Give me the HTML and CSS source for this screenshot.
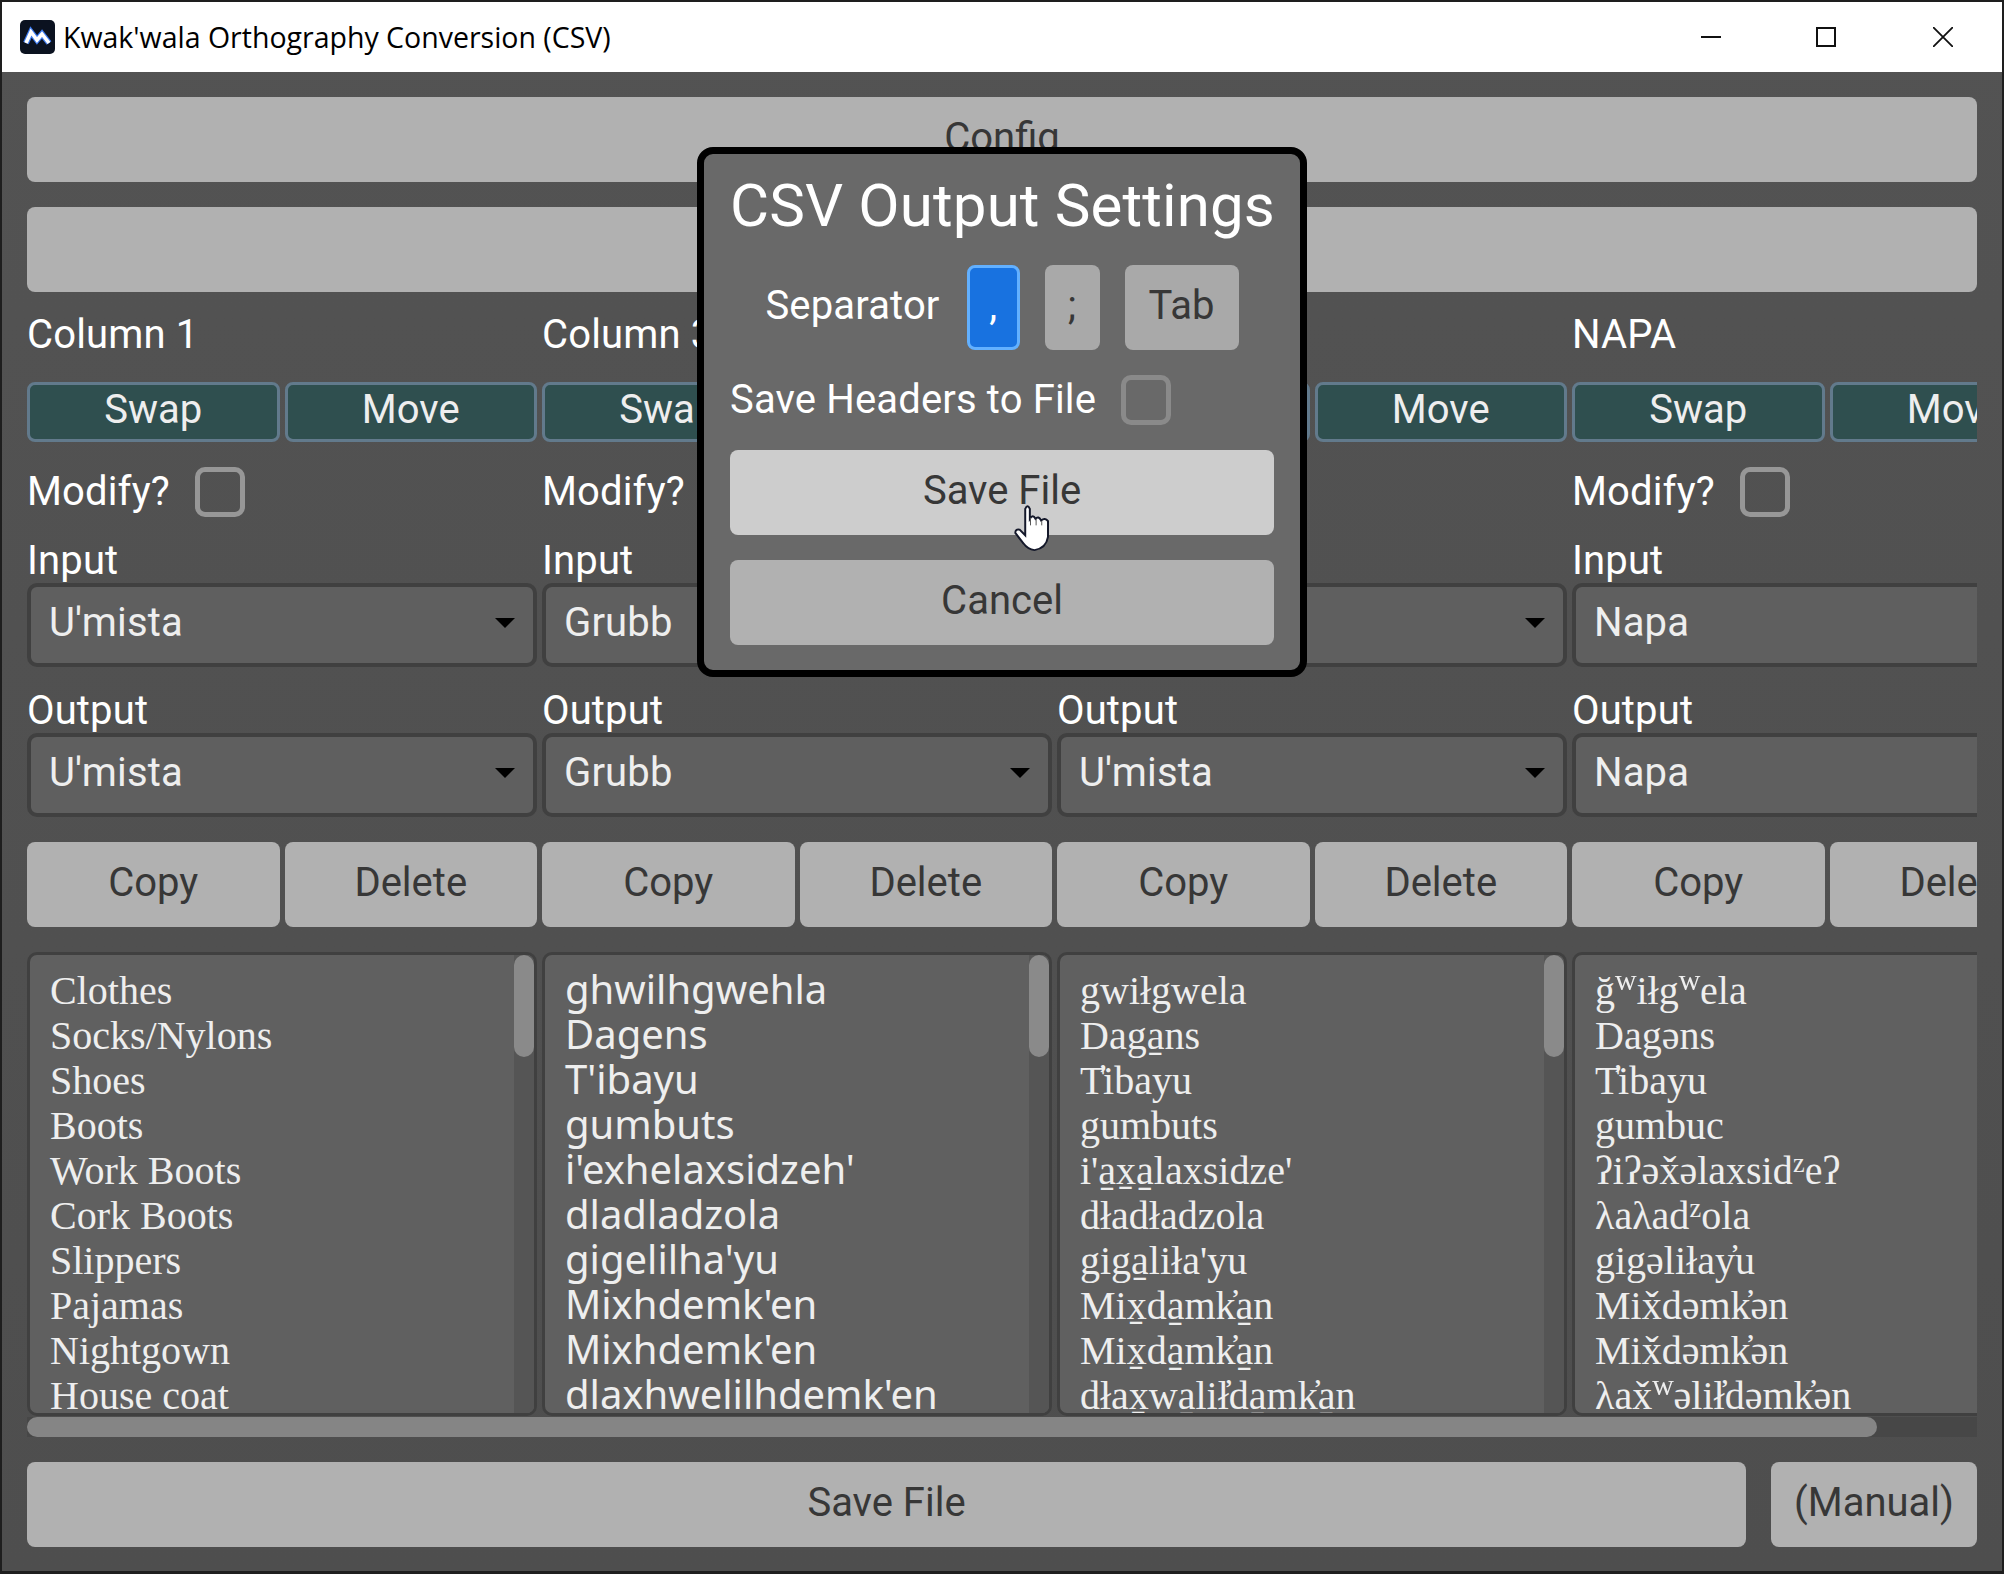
FILE: index.html
```html
<!DOCTYPE html>
<html lang="en">
<head>
    <meta charset="UTF-8">
    <title>Kwak'wala Orthography Conversion (CSV)</title>
    <link rel="stylesheet" href="styles.css">
</head>
<body>
<div class="window">
    <header class="titlebar">
        <svg class="app-icon" viewBox="0 0 35 34" width="35" height="34">
            <rect width="35" height="34" rx="5" fill="#0b1220"/>
            <path d="M6 23 L11 12 L17 20 L22 14 L29 23" fill="none" stroke="#3d7bf0" stroke-width="6"/>
            <path d="M6 23 L11 12 L17 20 L22 14 L29 23" fill="none" stroke="#fff" stroke-width="3.6"/>
        </svg>
        <span class="app-title">Kwak'wala Orthography Conversion (CSV)</span>
        <div class="win-controls">
            <svg viewBox="0 0 20 20" width="20" height="20"><path d="M0 10H20" stroke="#111" stroke-width="2"/></svg>
            <svg viewBox="0 0 20 20" width="20" height="20"><rect x="1" y="1" width="18" height="18" fill="none" stroke="#111" stroke-width="2"/></svg>
            <svg class="win-close" viewBox="0 0 20 20" width="20" height="20"><path d="M0 0L20 20M20 0L0 20" stroke="#111" stroke-width="1.8"/></svg>
        </div>
    </header>

    <main class="content">
        <button class="btn btn-wide">Config</button>
        <button class="btn btn-wide">Open File</button>

        <div class="scroll-area">
            <div class="columns">
                <section class="column">
                    <div class="label">Column 1</div>
                    <div class="btn-row">
                        <button class="btn-teal">Swap</button>
                        <button class="btn-teal">Move</button>
                    </div>
                    <div class="modify"><span>Modify?</span><span class="checkbox"></span></div>
                    <div class="field">
                        <div class="label">Input</div>
                        <div class="pick"><span>U'mista</span><i class="arrow"></i></div>
                    </div>
                    <div class="field">
                        <div class="label">Output</div>
                        <div class="pick"><span>U'mista</span><i class="arrow"></i></div>
                    </div>
                    <div class="btn-row">
                        <button class="btn">Copy</button>
                        <button class="btn">Delete</button>
                    </div>
                    <div class="list serif">
                        <div class="rows">
                            <div>Clothes</div>
                            <div>Socks/Nylons</div>
                            <div>Shoes</div>
                            <div>Boots</div>
                            <div>Work Boots</div>
                            <div>Cork Boots</div>
                            <div>Slippers</div>
                            <div>Pajamas</div>
                            <div>Nightgown</div>
                            <div>House coat</div>
                        </div>
                        <div class="vscroll"><div class="vthumb"></div></div>
                    </div>
                </section>

                <section class="column">
                    <div class="label">Column 3</div>
                    <div class="btn-row">
                        <button class="btn-teal">Swap</button>
                        <button class="btn-teal">Move</button>
                    </div>
                    <div class="modify"><span>Modify?</span><span class="checkbox"></span></div>
                    <div class="field">
                        <div class="label">Input</div>
                        <div class="pick"><span>Grubb</span><i class="arrow"></i></div>
                    </div>
                    <div class="field">
                        <div class="label">Output</div>
                        <div class="pick"><span>Grubb</span><i class="arrow"></i></div>
                    </div>
                    <div class="btn-row">
                        <button class="btn">Copy</button>
                        <button class="btn">Delete</button>
                    </div>
                    <div class="list noto">
                        <div class="rows">
                            <div>ghwilhgwehla</div>
                            <div>Dagens</div>
                            <div>T'ibayu</div>
                            <div>gumbuts</div>
                            <div>i'exhelaxsidzeh'</div>
                            <div>dladladzola</div>
                            <div>gigelilha'yu</div>
                            <div>Mixhdemk'en</div>
                            <div>Mixhdemk'en</div>
                            <div>dlaxhwelilhdemk'en</div>
                        </div>
                        <div class="vscroll"><div class="vthumb"></div></div>
                    </div>
                </section>

                <section class="column">
                    <div class="label">Column 4</div>
                    <div class="btn-row">
                        <button class="btn-teal">Swap</button>
                        <button class="btn-teal">Move</button>
                    </div>
                    <div class="modify"><span>Modify?</span><span class="checkbox"></span></div>
                    <div class="field">
                        <div class="label">Input</div>
                        <div class="pick"><span>U'mista</span><i class="arrow"></i></div>
                    </div>
                    <div class="field">
                        <div class="label">Output</div>
                        <div class="pick"><span>U'mista</span><i class="arrow"></i></div>
                    </div>
                    <div class="btn-row">
                        <button class="btn">Copy</button>
                        <button class="btn">Delete</button>
                    </div>
                    <div class="list serif">
                        <div class="rows">
                            <div>gwiłgwela</div>
                            <div>Daga̱ns</div>
                            <div>T̓ibayu</div>
                            <div>gumbuts</div>
                            <div>i'a̱x̱a̱laxsidze'</div>
                            <div>dładładzola</div>
                            <div>giga̱liła'yu</div>
                            <div>Mix̱da̱mk̓a̱n</div>
                            <div>Mix̱da̱mk̓a̱n</div>
                            <div>dłax̱wa̱lił̓da̱mk̓a̱n</div>
                        </div>
                        <div class="vscroll"><div class="vthumb"></div></div>
                    </div>
                </section>

                <section class="column">
                    <div class="label">NAPA</div>
                    <div class="btn-row">
                        <button class="btn-teal">Swap</button>
                        <button class="btn-teal">Move</button>
                    </div>
                    <div class="modify"><span>Modify?</span><span class="checkbox"></span></div>
                    <div class="field">
                        <div class="label">Input</div>
                        <div class="pick"><span>Napa</span><i class="arrow"></i></div>
                    </div>
                    <div class="field">
                        <div class="label">Output</div>
                        <div class="pick"><span>Napa</span><i class="arrow"></i></div>
                    </div>
                    <div class="btn-row">
                        <button class="btn">Copy</button>
                        <button class="btn">Delete</button>
                    </div>
                    <div class="list serif">
                        <div class="rows">
                            <div>ğ<span class="mod">ʷ</span>iłg<span class="mod">ʷ</span>ela</div>
                            <div>Dagəns</div>
                            <div>T̓ibayu</div>
                            <div>gumbuc</div>
                            <div>ʔiʔəx̌əlaxsid<span class="mod-z">ᶻ</span>eʔ</div>
                            <div>λaλad<span class="mod-z">ᶻ</span>ola</div>
                            <div>gigəliłay̓u</div>
                            <div>Mix̌dəmk̓ən</div>
                            <div>Mix̌dəmk̓ən</div>
                            <div>λax̌<span class="mod">ʷ</span>əlił̓dəmk̓ən</div>
                        </div>
                    </div>
                </section>
            </div>
            <div class="hscroll"><div class="hthumb"></div></div>
        </div>

        <div class="footer">
            <button class="btn btn-save">Save File</button>
            <button class="btn btn-manual">(Manual)</button>
        </div>
    </main>

    <!-- modal sits over the main view -->
    <div class="modal">
        <h2 class="modal-title">CSV Output Settings</h2>
        <div class="sep-row">
            <span class="sep-label">Separator</span>
            <button class="btn sep sep-on sep-comma">,</button>
            <button class="btn sep sep-semi">;</button>
            <button class="btn sep sep-tab">Tab</button>
        </div>
        <div class="headers-row"><span>Save Headers to File</span><span class="checkbox checkbox-modal"></span></div>
        <button class="btn btn-hover">Save File</button>
        <button class="btn">Cancel</button>
    </div>

    <svg class="cursor" viewBox="40 65 112 150" width="37" height="50">
        <path d="M77 165 L77 85 Q84 70 91 85 L91 115 Q100 100 108 115 Q117 105 125 120 Q137 110 146 122 L146 170 Q140 205 105 210 Q85 208 72 190 L47 158 Q47 145 60 148 Z" fill="#fff" stroke="#14182a" stroke-width="6"/>
        <path d="M93 112V135M110 115V135M127 122V135" stroke="#555" stroke-width="3" fill="none"/>
    </svg>
</div>
</body>
</html>
```

FILE: styles.css
```css
* {
    box-sizing: border-box;
}
html, body {
    margin: 0;
    padding: 0;
    background: #1e1e1e;
}
body {
    font-family: Roboto, sans-serif;
    font-size: 40px;
    letter-spacing: 0.15px;
    color: #fff;
}
button {
    font-family: Roboto, sans-serif;
    font-size: 40px;
    margin: 0;
    padding: 0 0 5px;
    border: none;
}
.window {
    position: relative;
    width: 2004px;
    height: 1574px;
    border: 2px solid #1e1e1e;
    border-bottom-width: 3px;
    display: flex;
    flex-direction: column;
    overflow: hidden;
    background: linear-gradient(#535353, #4e4e4e);
}

/* title bar */
.titlebar {
    height: 70px;
    flex: none;
    background: #fff;
    color: #000;
    display: flex;
    align-items: center;
    padding-left: 18px;
}
.app-icon {
    margin-right: 8px;
}
.app-title {
    font-family: "Open Sans", sans-serif;
    font-size: 28.5px;
    letter-spacing: 0;
}
.win-controls {
    margin-left: auto;
    display: flex;
    gap: 95px;
    padding-right: 49px;
}
.win-controls svg {
    display: block;
}
.win-close {
    margin-left: 2px;
}

/* main view */
.content {
    flex: 1;
    padding: 25px;
    display: flex;
    flex-direction: column;
    gap: 25px;
}
.btn {
    background: #b1b1b1;
    color: #373737;
    border-radius: 8px;
    height: 85px;
    flex: none;
}
.btn-wide {
    width: 100%;
}
.btn-hover {
    background: #cdcdcd;
}
.scroll-area {
    overflow: hidden;
}
.columns {
    display: flex;
    gap: 5px;
    width: 2055px;
}
.column {
    width: 510px;
    display: flex;
    flex-direction: column;
    gap: 25px;
}
.label {
    height: 40px;
    line-height: 36px;
}
.btn-row {
    display: flex;
    gap: 5px;
}
.btn-row button {
    flex: 1;
}
.btn-teal {
    height: 60px;
    background: #2f4f4f;
    color: #eee;
    border: 3px solid #627a8c;
    border-radius: 8px;
}
.modify {
    height: 50px;
    display: flex;
    align-items: center;
    gap: 25px;
}
.modify span:first-child {
    padding-bottom: 2px;
}
.checkbox {
    width: 50px;
    height: 50px;
    border: 5px solid #979797;
    border-radius: 10px;
    flex: none;
}
.field {
    display: flex;
    flex-direction: column;
    gap: 1px;
}
.field .label {
    line-height: 38px;
}
.pick {
    height: 84px;
    background: #5f5f5f;
    border: 4px solid #404040;
    border-radius: 10px;
    padding: 0 18px 5px;
    color: #eee;
    display: flex;
    align-items: center;
    justify-content: space-between;
}
.arrow {
    width: 0;
    height: 0;
    border-left: 10px solid transparent;
    border-right: 10px solid transparent;
    border-top: 10px solid #000;
}
.list {
    height: 464px;
    background: #606060;
    border: 3px solid #404040;
    border-radius: 10px;
    display: flex;
    overflow: hidden;
    color: #eee;
}
.rows {
    flex: 1;
    padding: 13px 0 0 20px;
    line-height: 45px;
    white-space: nowrap;
    overflow: hidden;
}
.serif {
    font-family: "Liberation Serif", "DejaVu Serif", serif;
    letter-spacing: 0;
}
.noto {
    font-family: "Noto Sans", sans-serif;
    letter-spacing: 0;
}
.noto .rows {
    padding-top: 11px;
}
.mod {
    font-size: 50px;
    line-height: 0;
}
.mod-z {
    font-size: 44px;
    line-height: 0;
}
.vscroll {
    width: 20px;
    flex: none;
    background: #555;
}
.vthumb {
    height: 102px;
    background: #8a8a8a;
    border-radius: 10px;
}
.hscroll {
    height: 20px;
    margin-top: 1px;
    background: #474747;
}
.hthumb {
    width: 1850px;
    height: 20px;
    background: #858585;
    border-radius: 10px;
}
.footer {
    display: flex;
    gap: 25px;
}
.btn-save {
    flex: 1;
}
.btn-manual {
    width: 206px;
}

/* modal */
.modal {
    position: absolute;
    left: 695px;
    top: 145px;
    width: 610px;
    height: 530px;
    padding: 26px;
    background: #696969;
    border: 7px solid #000;
    border-radius: 16px;
    display: flex;
    flex-direction: column;
    gap: 25px;
}
.modal-title {
    margin: -4px 0 4px;
    font-size: 60px;
    font-weight: 400;
    line-height: 60px;
    text-align: center;
    white-space: nowrap;
}
.sep-row {
    display: flex;
    align-items: center;
    justify-content: center;
    gap: 25px;
}
.sep-label {
    margin-right: 2px;
    padding-bottom: 5px;
}
.sep-comma {
    width: 53px;
}
.sep-semi {
    width: 55px;
    background: #a9a9a9;
}
.sep-tab {
    width: 114px;
    background: #a9a9a9;
}
.sep-on {
    background: #1872e0;
    color: #fff;
    border: 3px solid #62b0ff;
}
.headers-row {
    height: 50px;
    display: flex;
    align-items: center;
    gap: 25px;
}
.headers-row span:first-child {
    padding-bottom: 2px;
}
.checkbox-modal {
    border-color: #8a8a8a;
}
.cursor {
    position: absolute;
    left: 1011px;
    top: 500px;
}
```
